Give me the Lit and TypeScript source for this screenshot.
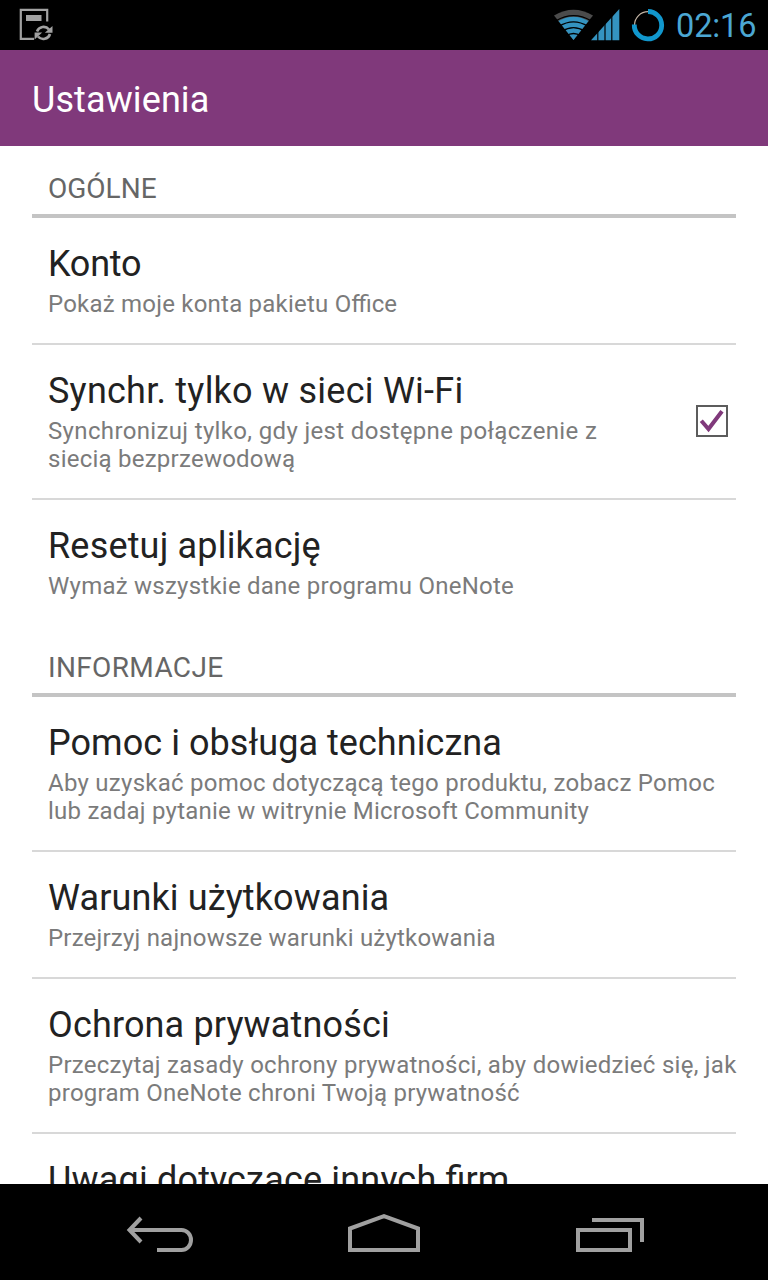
import { LitElement, html, css, svg, nothing } from "lit";
import { customElement, property } from "lit/decorators.js";
import { styleMap } from "lit/directives/style-map.js";

/** A run of text; `tail` keeps the default tracking so that its ligatures stay joined. */
interface Line {
  text: string;
  tracking?: number;
  tail?: string;
}

interface Setting {
  title: Line;
  summary: Line[];
  checked?: boolean;
}

interface Section {
  heading: Line;
  items: Setting[];
}

const SECTIONS: Section[] = [
  {
    heading: { text: "OGÓLNE" },
    items: [
      {
        title: { text: "Konto", tracking: -0.25 },
        summary: [{ text: "Pokaż moje konta pakietu ", tracking: 0.22, tail: "Office" }],
      },
      {
        title: { text: "Synchr. tylko w sieci Wi-Fi", tracking: 0.24 },
        summary: [
          { text: "Synchronizuj tylko, gdy jest dostępne połączenie z", tracking: 0.35 },
          { text: "siecią bezprzewodową", tracking: 0.24 },
        ],
        checked: true,
      },
      {
        title: { text: "Resetuj aplikację", tracking: 0.18 },
        summary: [{ text: "Wymaż wszystkie dane programu OneNote", tracking: 0.24 }],
      },
    ],
  },
  {
    heading: { text: "INFORMACJE", tracking: 0.35 },
    items: [
      {
        title: { text: "Pomoc i obsługa techniczna", tracking: 0.05 },
        summary: [
          { text: "Aby uzyskać pomoc dotyczącą tego produktu, zobacz Pomoc", tracking: 0.265 },
          { text: "lub zadaj pytanie w witrynie Microsoft Community", tracking: 0.225 },
        ],
      },
      {
        title: { text: "Warunki użytkowania", tracking: 0.12 },
        summary: [{ text: "Przejrzyj najnowsze warunki użytkowania", tracking: 0.21 }],
      },
      {
        title: { text: "Ochrona prywatności", tracking: 0.15 },
        summary: [
          { text: "Przeczytaj zasady ochrony prywatności, aby dowiedzieć się, jak", tracking: 0.265 },
          { text: "program OneNote chroni Twoją prywatność", tracking: 0.25 },
        ],
      },
      { title: { text: "Uwagi dotyczące innych ", tracking: 0.18, tail: "firm" }, summary: [] },
    ],
  },
];

const tracked = (line: Line) =>
  html`<span style=${styleMap({ letterSpacing: `${line.tracking ?? 0}px` })}>${line.text}</span>${line.tail ?? nothing}`;

@customElement("status-bar")
class StatusBar extends LitElement {
  static styles = css`
    :host { display: flex; justify-content: space-between; height: 50px; background: #000; }
    svg { display: block; }
    .right { display: flex; }
    .clock { width: 92px; font-size: 32.5px; line-height: 52px; letter-spacing: -0.1px; color: #4ba7d3; white-space: nowrap; }
  `;
  render() {
    return html`
      <svg width="60" height="50" viewBox="0 0 60 50" fill="none" stroke="#a2a2a2">
        <path d="M47.2 21.500V9.800H20.800V38.900H34" stroke-width="2.200" />
        <rect x="26" y="15" width="15.500" height="6" fill="#a2a2a2" stroke="none" />
        <path d="M37 31.500A7 7 0 0 1 49 29.500M50 34A7 7 0 0 1 38 36.500" stroke-width="2.600" />
        <path d="M52.500 26V32.800H44.800ZM34.600 39.400V32.600H42.200Z" fill="#a2a2a2" stroke="none" />
      </svg>
      <div class="right">
        <svg width="136" height="50" viewBox="540 0 136 50" fill="none">
          <path d="M573.5 40L554 15.5Q573.5 4 593 15.5Z" fill="#4b4b4b" />
          <path d="M573.5 40L558.5 21Q573.5 12.500 588.500 21Z" fill="#3493c0" />
          ${svg`<g stroke="#000" stroke-width="1.3">
            <path d="M556 20.800Q573.5 10.500 591 20.800" />
            <path d="M559 26.300Q573.5 17.500 588 26.300" />
            <path d="M562 31.300Q573.5 24 585 31.300" />
            <path d="M566 36Q573.5 31 581 36" />
          </g>`}
          <path d="M591 40.300L619.300 9V40.300Z" fill="#3493c0" />
          <path d="M597.800 8V41M605 8V41M611.800 8V41" stroke="#000" stroke-width="1.2" />
          <path d="M648 11.700A13.500 13.500 0 0 0 634.500 25" stroke="#c4b5a5" stroke-width="1.200" />
          <path d="M648 11.500A13.700 13.700 0 1 1 634.300 24.500" stroke="#1197cd" stroke-width="4.800" />
        </svg>
        <div class="clock">02:16</div>
      </div>
    `;
  }
}

@customElement("setting-row")
class SettingRow extends LitElement {
  @property({ attribute: false }) item!: Setting;
  static styles = css`
    :host { display: flex; align-items: center; justify-content: space-between; padding: 25px 8px 25px 16px; }
    .title { font-size: 36px; line-height: 42px; color: #222; margin-bottom: 5px; white-space: nowrap; }
    .line { font-size: 24px; line-height: 28px; color: #7b7b7b; white-space: nowrap; }
    .text { flex: 1; min-width: 0; }
    svg { display: block; flex: none; margin-bottom: 2px; }
  `;
  render() {
    const { title, summary, checked } = this.item;
    return html`
      <div class="text">
        <div class="title">${tracked(title)}</div>
        ${summary.map((l) => html`<div class="line">${tracked(l)}</div>`)}
      </div>
      ${checked
        ? html`<svg width="32" height="32" viewBox="0 0 32 32" fill="none">
            <rect x="1" y="1" width="30" height="30" stroke="#5c5c5c" stroke-width="2" />
            <path d="M5.300 15.800L12.500 24L26 6.300" stroke="#80397b" stroke-width="4" />
          </svg>`
        : nothing}
    `;
  }
}

@customElement("nav-bar")
class NavBar extends LitElement {
  static styles = css`
    :host { display: flex; justify-content: center; gap: 120px; height: 96px; background: #000; }
    svg { display: block; }
  `;
  render() {
    return html`
      <svg width="104" height="96" viewBox="108 1184 104 96" fill="none" stroke="#a0a0a0" stroke-width="4">
        <path d="M130 1230H181.500A9.500 10 0 0 1 181.500 1250H157" />
        <path d="M141 1218L129.500 1230L141 1242" />
      </svg>
      <svg width="104" height="96" viewBox="332 1184 104 96" fill="none" stroke="#a0a0a0" stroke-width="4">
        <path d="M350 1250V1228.500L384 1216.200L418 1228.500V1250Z" />
      </svg>
      <svg width="104" height="96" viewBox="556 1184 104 96" fill="none" stroke="#a0a0a0" stroke-width="4">
        <rect x="578" y="1230" width="52" height="20" />
        <path d="M592 1220H642V1242" />
      </svg>
    `;
  }
}

@customElement("app-root")
class AppRoot extends LitElement {
  static styles = css`
    :host {
      display: flex; flex-direction: column; width: 768px; height: 1280px; overflow: hidden;
      background: #fff; font-family: Roboto, "Noto Sans", sans-serif;
    }
    status-bar, nav-bar, .toolbar { flex: none; }
    .toolbar { height: 96px; padding-left: 32px; background: #80397b; color: #fff; font-size: 36px; line-height: 101px; }
    .content { flex: 1; min-height: 0; overflow: hidden; padding: 0 32px; }
    .heading { height: 68px; padding-left: 16px; border-bottom: 4px solid #c4c4c4; font-size: 28px; line-height: 86px; color: #666; }
    setting-row + setting-row { border-top: 2px solid #d8d8d8; }
  `;
  render() {
    return html`
      <status-bar></status-bar>
      <div class="toolbar">${tracked({ text: "Ustawienia", tracking: 0.1 })}</div>
      <div class="content">
        ${SECTIONS.map(
          (s) => html`
            <div class="heading">${tracked(s.heading)}</div>
            ${s.items.map((i) => html`<setting-row .item=${i}></setting-row>`)}
          `,
        )}
      </div>
      <nav-bar></nav-bar>
    `;
  }
}
